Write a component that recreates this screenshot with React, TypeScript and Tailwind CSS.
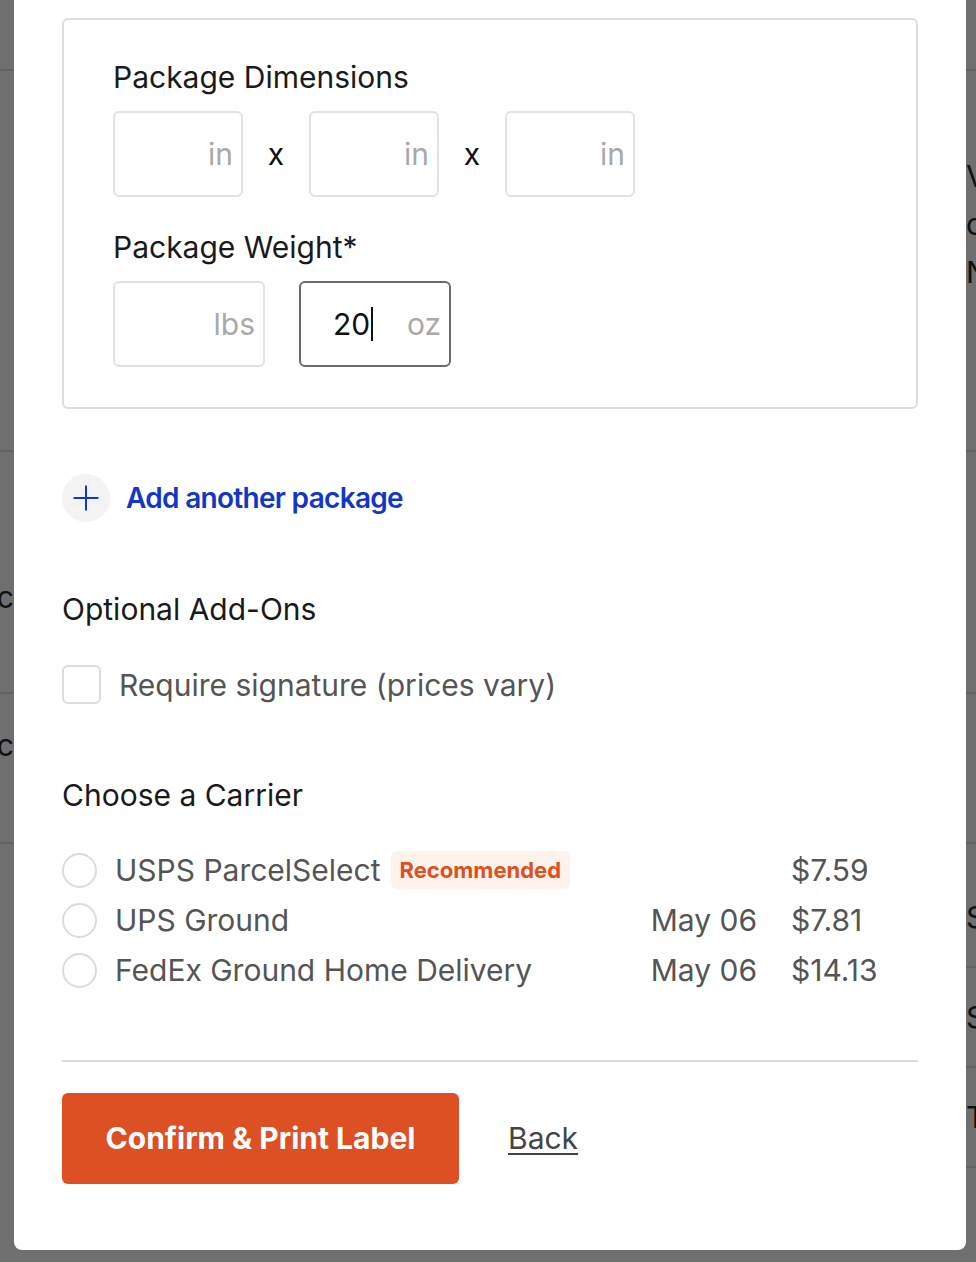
import { Plus } from "lucide-react";

const FONT = { fontFamily: "Inter, 'Noto Sans', sans-serif" };

const carriers = [
  { name: "USPS ParcelSelect", date: "", price: "$7.59", recommended: true },
  { name: "UPS Ground", date: "May 06", price: "$7.81", recommended: false },
  { name: "FedEx Ground Home Delivery", date: "May 06", price: "$14.13", recommended: false },
];

const UnitInput = ({ unit, width, value, active }: { unit: string; width: string; value?: string; active?: boolean }) => (
  <div
    className={`${width} h-[86px] rounded-md border-2 ${active ? "border-[#6b6b6b]" : "border-[#e2e2e2]"} flex items-center pr-2 pl-8`}
  >
    <div className="flex-1 flex items-center text-[30px] text-[#111]">
      {value}
      {active && <span className="w-[2px] h-[34px] bg-[#111] ml-[1px]" />}
    </div>
    <span className="text-[30px] text-[#a9a9a9]">{unit}</span>
  </div>
);

type Row = { h: string; pad: string; texts: string[] };

// strips of the page behind the overlay
const BackStrip = ({ side }: { side: "left" | "right" }) => {
  const rows: Row[] =
    side === "left"
      ? [
          { h: "h-[71px]", pad: "", texts: [] },
          { h: "h-[381px]", pad: "", texts: [] },
          { h: "h-[242px]", pad: "pt-[126px]", texts: ["12c"] },
          { h: "h-[150px]", pad: "pt-[32px]", texts: ["13c"] },
        ]
      : [
          { h: "h-[71px]", pad: "", texts: [] },
          { h: "h-[381px]", pad: "pt-[86px] gap-[10px]", texts: ["VI", "c", "N"] },
          { h: "h-[242px]", pad: "", texts: [] },
          { h: "h-[150px]", pad: "", texts: [] },
          { h: "h-[124px]", pad: "pt-[54px]", texts: ["Su"] },
          { h: "h-[100px]", pad: "pt-[30px]", texts: ["Sh"] },
          { h: "h-[100px]", pad: "pt-[30px]", texts: ["To"] },
        ];
  return (
    <div className={`${side === "left" ? "w-[14px]" : "w-[10px]"} shrink-0 flex flex-col overflow-hidden`}>
      {rows.map((r, i) => (
        <div
          key={i}
          className={`${r.h} ${r.pad} shrink-0 flex flex-col ${side === "left" ? "items-end" : "items-start"} border-b-2 border-[#626262] overflow-hidden`}
        >
          {r.texts.map((t) => (
            <span key={t} className="text-[30px] text-[#111] whitespace-nowrap leading-[38px]">
              {t}
            </span>
          ))}
        </div>
      ))}
    </div>
  );
};

export default function App() {
  return (
    <div className="w-[976px] h-[1262px] bg-[#6f6f6f] flex overflow-hidden" style={FONT}>
      <BackStrip side="left" />

      {/* Modal */}
      <div className="w-[952px] h-[1250px] shrink-0 bg-white rounded-b-lg px-12 pt-[18px] flex flex-col">
        {/* Package card */}
        <div className="border-2 border-[#dedede] rounded-md pl-[49px] pt-[39px] pb-10">
          <div className="text-[30px] leading-9 text-[#1a1a1a]">Package Dimensions</div>
          <div className="mt-4 flex items-center">
            <UnitInput unit="in" width="w-[130px]" />
            <span className="w-[66px] text-center text-[30px] text-[#111]">x</span>
            <UnitInput unit="in" width="w-[130px]" />
            <span className="w-[66px] text-center text-[30px] text-[#111]">x</span>
            <UnitInput unit="in" width="w-[130px]" />
          </div>

          <div className="mt-8 text-[30px] leading-9 text-[#1a1a1a]">Package Weight*</div>
          <div className="mt-4 flex items-center gap-[34px]">
            <UnitInput unit="lbs" width="w-[152px]" />
            <UnitInput unit="oz" width="w-[152px]" value="20" active />
          </div>
        </div>

        {/* Add another package */}
        <div className="mt-[65px] flex items-center gap-4">
          <div className="w-12 h-12 rounded-full bg-[#f3f3f3] flex items-center justify-center">
            <Plus className="w-10 h-10 text-[#1237c6]" strokeWidth={1.2} />
          </div>
          <span className="text-[28px] leading-9 font-semibold tracking-[-0.7px] text-[#1237c6]">Add another package</span>
        </div>

        {/* Add-ons */}
        <div className="mt-[69px] text-[30px] leading-9 text-[#1a1a1a]">Optional Add-Ons</div>
        <label className="mt-[38px] flex items-center gap-[18px]">
          <span className="w-[39px] h-[39px] rounded-md border-2 border-[#dcdcdc]" />
          <span className="text-[30px] leading-9 text-[#555]">Require signature (prices vary)</span>
        </label>

        {/* Carrier */}
        <div className="mt-[73px] text-[30px] leading-9 text-[#1a1a1a]">Choose a Carrier</div>
        <div className="mt-8 grid grid-cols-[1fr_auto_127px] gap-x-[34px]">
          {carriers.map((c) => (
            <div key={c.name} className="contents">
              <div className="h-[50px] flex items-center">
                <span className="w-[35px] h-[35px] rounded-full border-2 border-[#dcdcdc] shrink-0" />
                <span className="ml-[18px] text-[30px] leading-9 text-[#555]">{c.name}</span>
                {c.recommended && (
                  <span className="ml-[10px] h-[38px] px-[9px] rounded-md bg-[#fdf2ec] text-[22px] font-bold text-[#e0501f] flex items-center">
                    Recommended
                  </span>
                )}
              </div>
              <div className="h-[50px] flex items-center justify-end text-[30px] text-[#555]">{c.date}</div>
              <div className="h-[50px] flex items-center text-[30px] text-[#555]">{c.price}</div>
            </div>
          ))}
        </div>

        <div className="mt-[65px] h-[2px] bg-[#dcdcdc]" />

        {/* Actions */}
        <div className="mt-[31px] flex items-center gap-[49px]">
          <button className="w-[397px] h-[91px] rounded-md bg-[#dc5024] text-white text-[30px] font-bold">
            Confirm &amp; Print Label
          </button>
          <a className="text-[30px] text-[#444] underline underline-offset-4 decoration-2">Back</a>
        </div>
      </div>

      <BackStrip side="right" />
    </div>
  );
}
